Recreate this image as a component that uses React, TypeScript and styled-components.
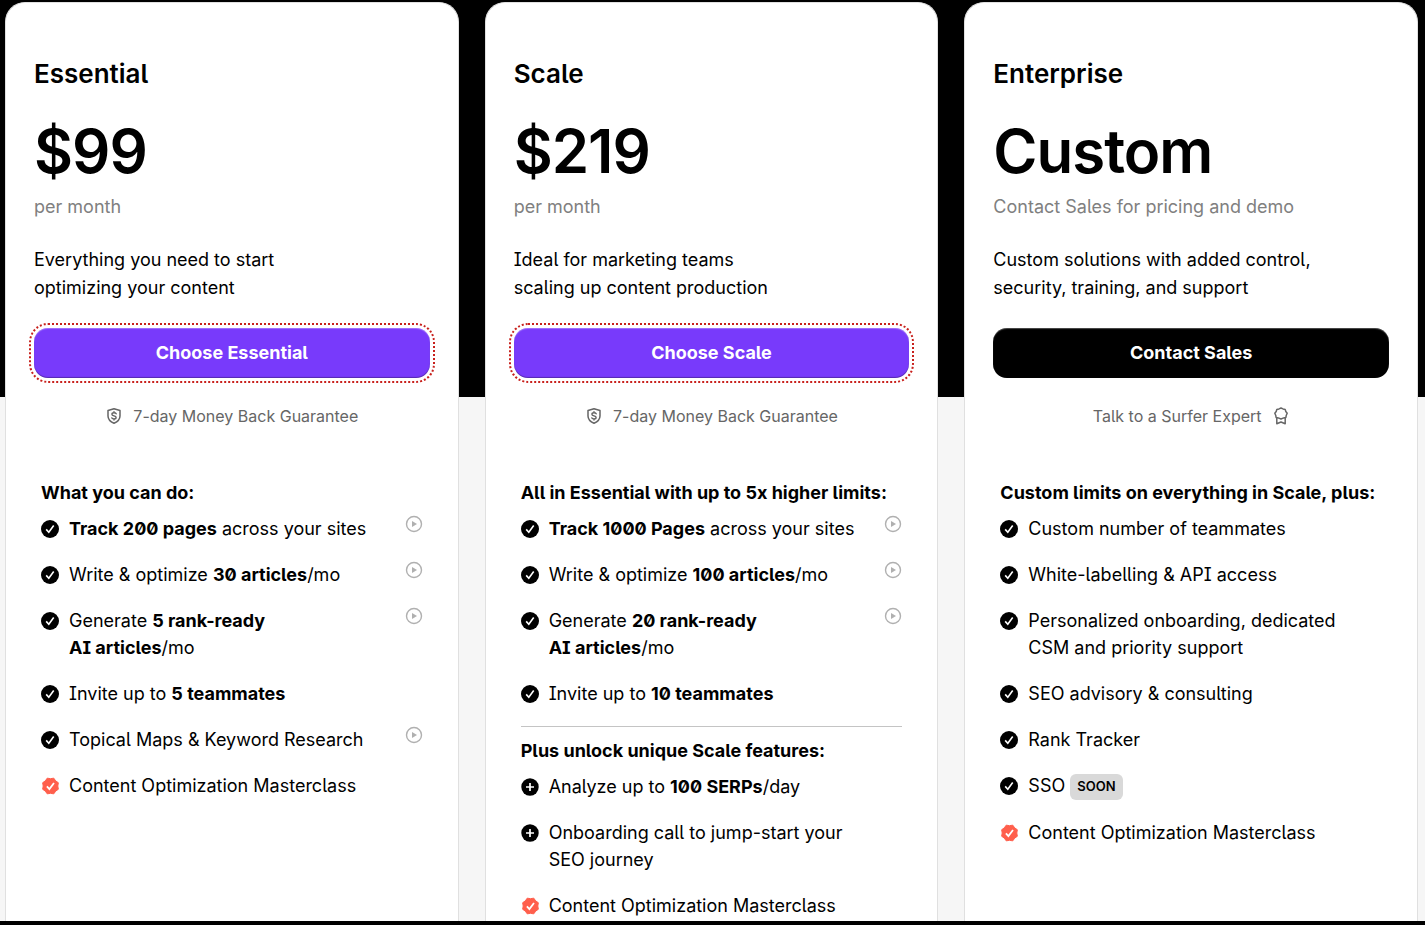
import React from "react";
import styled, { createGlobalStyle } from "styled-components";

const Global = createGlobalStyle`
  *, *::before, *::after { box-sizing: border-box; }
  body {
    margin: 0;
    background: #000;
    color: #000;
    font-family: Inter, "Liberation Sans", sans-serif;
    font-feature-settings: "ss02" 1;
    font-size: 18px;
    line-height: 28px;
  }
`;

const Page = styled.div`
  display: flex;
  flex-direction: column;
  min-height: 100vh;
`;

const Pricing = styled.main`
  flex: 1;
  display: grid;
  grid-template-columns: repeat(3, minmax(0, 1fr));
  gap: 26px;
  padding: 2px 7px 0 5px;
  background: linear-gradient(#000 397px, #f6f6f6 397px);
`;

const Footer = styled.footer`
  height: 4px;
  background: #000;
`;

const Card = styled.section`
  padding: 55px 28px 0;
  background: #fff;
  border: 1px solid #e0e0e0;
  border-bottom: 0;
  border-radius: 20px 20px 0 0;
`;

const PlanName = styled.h2`
  margin: 0;
  font-size: 26px;
  line-height: 32px;
  font-weight: 600;
`;

const Price = styled.p`
  margin: 25px 0 0;
  font-size: 60px;
  line-height: 72px;
  font-weight: 600;
  letter-spacing: -1px;
`;

const Period = styled.p`
  margin: 6px 0 0;
  color: #808080;
`;

const Summary = styled.p`
  margin: 25px 0 0;
  white-space: pre-line;
`;

const CtaButton = styled.button<{ $tone: "violet" | "black" }>`
  display: block;
  width: 100%;
  height: 50px;
  margin-top: 26px;
  border: 0;
  border-radius: 14px;
  background: ${(p) => (p.$tone === "violet" ? "#783afb" : "#000")};
  box-shadow: inset 0 1px 1px rgba(255, 255, 255, 0.3), inset 0 -1px 1px rgba(0, 0, 0, 0.3);
  outline: ${(p) => (p.$tone === "violet" ? "2px dotted #c8201c" : "none")};
  outline-offset: 3px;
  color: #fff;
  font: inherit;
  font-weight: 700;
  cursor: pointer;
`;

const Note = styled.p`
  display: flex;
  justify-content: center;
  align-items: center;
  gap: 10px;
  margin: 24px 0 0;
  color: #666;
  font-size: 16px;
`;

const Features = styled.div`
  margin: 49px 7px 0;
`;

const GroupTitle = styled.h3`
  margin: 0 0 8px;
  font-size: 18px;
  line-height: 28px;
  font-weight: 700;
  white-space: nowrap;
`;

const Divider = styled.hr`
  height: 1px;
  margin: 19px 0 10px;
  border: 0;
  background: #c4c4c4;
`;

const List = styled.ul`
  display: flex;
  flex-direction: column;
  gap: 19px;
  margin: 0;
  padding: 0;
  list-style: none;
`;

const Item = styled.li`
  display: flex;
  align-items: flex-start;
  gap: 9px;
  line-height: 27px;

  strong { font-weight: 700; }
`;

const Marker = styled.span`
  flex: none;
  display: flex;
  align-items: center;
  width: 19px;
  height: 27px;
`;

const ItemText = styled.span`
  flex: 1;
  white-space: pre-line;
`;

const PlayButton = styled.button`
  flex: none;
  display: flex;
  width: 18px;
  height: 18px;
  padding: 0;
  border: 0;
  background: none;
  color: #b0b0b0;
  cursor: pointer;
`;

const Badge = styled.span`
  display: inline-block;
  padding: 0 7px 2px;
  border-radius: 6px;
  background: #d9d9d9;
  font-size: 13px;
  line-height: 24px;
  font-weight: 600;
  vertical-align: middle;
`;

const CheckIcon = () => (
  <svg width="18" height="18" viewBox="0 0 18 18" aria-hidden="true">
    <circle cx="9" cy="9" r="9" fill="#000" />
    <path d="M5.2 9.4 7.8 12.3 12.7 5.5" fill="none" stroke="#fff" strokeWidth="1.6" />
  </svg>
);

const PlusIcon = () => (
  <svg width="18" height="18" viewBox="0 0 18 18" aria-hidden="true">
    <circle cx="9" cy="9" r="8.7" fill="#000" />
    <path d="M9 5v8M5 9h8" stroke="#fff" strokeWidth="1.7" />
  </svg>
);

const sealPoints = Array.from({ length: 16 }, (_, i) => {
  const angle = (i * Math.PI) / 8 + Math.PI / 8;
  const radius = i % 2 === 0 ? 8.5 : 7.3;
  return `${9 + radius * Math.cos(angle)},${9 + radius * Math.sin(angle)}`;
}).join(" ");

const SealIcon = () => (
  <svg width="19" height="18" viewBox="0 0 18 18" aria-hidden="true">
    <polygon points={sealPoints} fill="#ff5f4c" stroke="#ff5f4c" strokeWidth="1" strokeLinejoin="round" />
    <path d="M5.4 9.3 7.9 12 12.5 6" fill="none" stroke="#fff" strokeWidth="1.8" />
  </svg>
);

const PlayIcon = () => (
  <svg width="18" height="18" viewBox="0 0 18 18" aria-hidden="true">
    <circle cx="9" cy="9" r="7.5" fill="none" stroke="currentColor" strokeWidth="1.4" />
    <path d="M7 6v6l5-3z" fill="currentColor" />
  </svg>
);

const ShieldIcon = () => (
  <svg width="18" height="18" viewBox="0 0 18 18" fill="none" stroke="currentColor" strokeWidth="1.5" strokeLinecap="round" strokeLinejoin="round" aria-hidden="true">
    <path d="M9 1.700 15 3.500V9c0 3.600-2.800 5.900-6 7.300C5.800 14.900 3 12.600 3 9V3.500z" />
    <path d="M11.200 6.800C10.800 6 10 5.800 9 5.800c-1.300 0-2.100.5-2.100 1.500 0 2.200 4.200 1 4.200 3.100 0 1-.8 1.500-2.100 1.500-1 0-1.800-.3-2.200-1M9 4.600v1.200M9 11.900v1.200" strokeWidth="1.4" />
  </svg>
);

const AwardIcon = () => (
  <svg width="18" height="18" viewBox="0 0 18 18" fill="none" stroke="currentColor" strokeWidth="1.5" strokeLinejoin="round" aria-hidden="true">
    <path d="M9 1l2 .9 2.200.5.600 2.100 1.400 1.800-.9 1.900-.4 2.200-2.200.5L9 12l-2.700-1.100-2.200-.5-.4-2.200-.9-1.900 1.400-1.800.6-2.100L7 1.900z" />
    <path d="M4.800 10.500v6.300L9 15l4.200 1.800v-6.300" />
  </svg>
);

const markers = { check: CheckIcon, plus: PlusIcon, seal: SealIcon };

type Feature = { icon?: keyof typeof markers; text: React.ReactNode; video?: boolean };
type Group = { title: string; items: Feature[] };
type Plan = {
  name: string;
  price: string;
  period: string;
  summary: string;
  cta: string;
  tone: "violet" | "black";
  note: React.ReactNode;
  groups: Group[];
};

const guarantee = (
  <>
    <ShieldIcon />
    7-day Money Back Guarantee
  </>
);

const masterclass: Feature = { icon: "seal", text: "Content Optimization Masterclass" };

const plans: Plan[] = [
  {
    name: "Essential",
    price: "$99",
    period: "per month",
    summary: "Everything you need to start\noptimizing your content",
    cta: "Choose Essential",
    tone: "violet",
    note: guarantee,
    groups: [
      {
        title: "What you can do:",
        items: [
          { text: <><strong>Track 200 pages</strong> across your sites</>, video: true },
          { text: <>Write &amp; optimize <strong>30 articles</strong>/mo</>, video: true },
          { text: <>Generate <strong>5 rank-ready{"\n"}AI articles</strong>/mo</>, video: true },
          { text: <>Invite up to <strong>5 teammates</strong></> },
          { text: "Topical Maps & Keyword Research", video: true },
          masterclass,
        ],
      },
    ],
  },
  {
    name: "Scale",
    price: "$219",
    period: "per month",
    summary: "Ideal for marketing teams\nscaling up content production",
    cta: "Choose Scale",
    tone: "violet",
    note: guarantee,
    groups: [
      {
        title: "All in Essential with up to 5x higher limits:",
        items: [
          { text: <><strong>Track 1000 Pages</strong> across your sites</>, video: true },
          { text: <>Write &amp; optimize <strong>100 articles</strong>/mo</>, video: true },
          { text: <>Generate <strong>20 rank-ready{"\n"}AI articles</strong>/mo</>, video: true },
          { text: <>Invite up to <strong>10 teammates</strong></> },
        ],
      },
      {
        title: "Plus unlock unique Scale features:",
        items: [
          { icon: "plus", text: <>Analyze up to <strong>100 SERPs</strong>/day</> },
          { icon: "plus", text: "Onboarding call to jump-start your\nSEO journey" },
          masterclass,
        ],
      },
    ],
  },
  {
    name: "Enterprise",
    price: "Custom",
    period: "Contact Sales for pricing and demo",
    summary: "Custom solutions with added control,\nsecurity, training, and support",
    cta: "Contact Sales",
    tone: "black",
    note: (
      <>
        Talk to a Surfer Expert
        <AwardIcon />
      </>
    ),
    groups: [
      {
        title: "Custom limits on everything in Scale, plus:",
        items: [
          { text: "Custom number of teammates" },
          { text: "White-labelling & API access" },
          { text: "Personalized onboarding, dedicated\nCSM and priority support" },
          { text: "SEO advisory & consulting" },
          { text: "Rank Tracker" },
          { text: <>SSO <Badge>SOON</Badge></> },
          masterclass,
        ],
      },
    ],
  },
];

export default function App() {
  return (
    <Page>
      <Global />
      <Pricing>
        {plans.map((plan) => (
          <Card key={plan.name}>
            <PlanName>{plan.name}</PlanName>
            <Price>{plan.price}</Price>
            <Period>{plan.period}</Period>
            <Summary>{plan.summary}</Summary>
            <CtaButton type="button" $tone={plan.tone}>{plan.cta}</CtaButton>
            <Note>{plan.note}</Note>
            <Features>
              {plan.groups.map((group, g) => (
                <React.Fragment key={group.title}>
                  {g > 0 && <Divider />}
                  <GroupTitle>{group.title}</GroupTitle>
                  <List>
                    {group.items.map((item, i) => {
                      const Icon = markers[item.icon ?? "check"];
                      return (
                        <Item key={i}>
                          <Marker><Icon /></Marker>
                          <ItemText>{item.text}</ItemText>
                          {item.video && (
                            <PlayButton type="button" aria-label="Play video">
                              <PlayIcon />
                            </PlayButton>
                          )}
                        </Item>
                      );
                    })}
                  </List>
                </React.Fragment>
              ))}
            </Features>
          </Card>
        ))}
      </Pricing>
      <Footer />
    </Page>
  );
}
